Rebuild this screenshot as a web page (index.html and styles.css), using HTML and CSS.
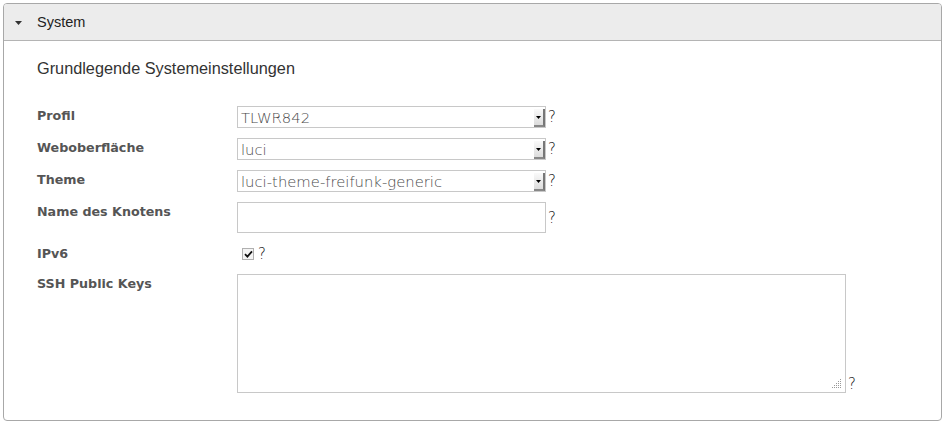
FILE: index.html
```html
<!DOCTYPE html>
<html lang="de">
<head>
<meta charset="utf-8">
<title>System</title>
<link rel="stylesheet" href="styles.css">
</head>
<body>
<div class="panel">
  <div class="panel-head">
    <svg class="caret" width="7" height="4" viewBox="0 0 7 4"><path d="M0 0h7L3.5 4z" fill="#333"/></svg>
    <span class="panel-title">System</span>
  </div>
  <div class="panel-body">
    <p class="desc">Grundlegende Systemeinstellungen</p>
    <div class="form">
      <div class="row row-select">
        <label class="lbl">Profil</label>
        <div class="field">
          <div class="select"><span class="sel-text">TLWR842</span><span class="sel-btn"><svg width="5" height="3" viewBox="0 0 5 3"><path d="M0 0h5L2.5 3z" fill="#000"/></svg></span></div>
          <span class="help">?</span>
        </div>
      </div>
      <div class="row row-select">
        <label class="lbl">Weboberfläche</label>
        <div class="field">
          <div class="select"><span class="sel-text">luci</span><span class="sel-btn"><svg width="5" height="3" viewBox="0 0 5 3"><path d="M0 0h5L2.5 3z" fill="#000"/></svg></span></div>
          <span class="help">?</span>
        </div>
      </div>
      <div class="row row-select">
        <label class="lbl">Theme</label>
        <div class="field">
          <div class="select"><span class="sel-text">luci-theme-freifunk-generic</span><span class="sel-btn"><svg width="5" height="3" viewBox="0 0 5 3"><path d="M0 0h5L2.5 3z" fill="#000"/></svg></span></div>
          <span class="help">?</span>
        </div>
      </div>
      <div class="row row-text">
        <label class="lbl">Name des Knotens</label>
        <div class="field">
          <div class="textbox"></div>
          <span class="help help-text">?</span>
        </div>
      </div>
      <div class="row row-check">
        <label class="lbl">IPv6</label>
        <div class="field">
          <span class="checkbox"><svg width="9" height="8" viewBox="0 0 9 8"><path d="M1 4.2l2.4 2.4L8 1.3" fill="none" stroke="#111" stroke-width="1.8"/></svg></span>
          <span class="help help-check">?</span>
        </div>
      </div>
      <div class="row row-area">
        <label class="lbl">SSH Public Keys</label>
        <div class="field field-area">
          <div class="textarea"><span class="grip"><svg width="9" height="9" viewBox="0 0 9 9"><g fill="#999"><rect x="8" y="0" width="1" height="1"/><rect x="6" y="2" width="1" height="1"/><rect x="8" y="2" width="1" height="1"/><rect x="4" y="4" width="1" height="1"/><rect x="6" y="4" width="1" height="1"/><rect x="8" y="4" width="1" height="1"/><rect x="2" y="6" width="1" height="1"/><rect x="4" y="6" width="1" height="1"/><rect x="6" y="6" width="1" height="1"/><rect x="8" y="6" width="1" height="1"/><rect x="0" y="8" width="1" height="1"/><rect x="2" y="8" width="1" height="1"/><rect x="4" y="8" width="1" height="1"/><rect x="6" y="8" width="1" height="1"/><rect x="8" y="8" width="1" height="1"/></g></svg></span></div>
          <span class="help help-area">?</span>
        </div>
      </div>
    </div>
  </div>
</div>
</body>
</html>
```

FILE: styles.css
```css
html, body {
  margin: 0;
  padding: 0;
  background: #fff;
}
body {
  padding: 3px 0 0 3px;
  font-family: "Liberation Sans", Arial, sans-serif;
}
.panel {
  width: 937px;
  height: 416px;
  border: 1px solid #a8a8a8;
  border-radius: 4px;
  overflow: hidden;
}
.panel-head {
  height: 36px;
  background: #ececec;
  border-bottom: 1px solid #b4b4b4;
  display: flex;
  align-items: center;
}
.caret {
  margin-left: 11px;
  margin-right: 15px;
  margin-top: 1px;
  flex: none;
}
.panel-title {
  font-size: 14.5px;
  color: #222;
}
.panel-body {
  padding: 18px 0 0 33px;
}
.desc {
  margin: 0;
  font-size: 16.3px;
  color: #333;
  line-height: 18px;
}
.form {
  margin-top: 29px;
}
.row {
  display: flex;
}
.lbl {
  width: 200px;
  flex: none;
  font-family: "DejaVu Sans", Verdana, sans-serif;
  font-weight: bold;
  font-size: 12.7px;
  color: #555;
  line-height: 16px;
  padding-top: 2px;
}
.field {
  display: flex;
  align-items: flex-start;
}
.row-select {
  height: 32px;
}
.select {
  width: 307px;
  height: 20px;
  border: 1px solid #c8c8c8;
  display: flex;
  align-items: center;
  justify-content: space-between;
  background: #fff;
}
.sel-text {
  font-family: "DejaVu Sans", sans-serif;
  font-weight: 200;
  font-size: 14.8px;
  color: #4a4a4a;
  padding-left: 3px;
  white-space: nowrap;
}
.sel-btn {
  width: 9px;
  height: 16px;
  background: linear-gradient(#fafafa, #dcdcdc);
  border-right: 2px solid #777;
  border-bottom: 2px solid #888;
  display: flex;
  align-items: center;
  justify-content: center;
  align-self: flex-end;
}
.help {
  font-family: "DejaVu Sans", sans-serif;
  font-weight: 200;
  font-size: 15px;
  color: #111;
  margin-left: 2px;
  line-height: 15px;
  margin-top: 4px;
}
.row-text {
  height: 45px;
}
.textbox {
  width: 307px;
  height: 29px;
  border: 1px solid #c8c8c8;
  background: #fff;
}
.help-text {
  margin-top: 9px;
}
.row-check {
  height: 27px;
}
.row-check .lbl {
  padding-top: 0;
  line-height: 14px;
}
.checkbox {
  width: 10px;
  height: 10px;
  border: 1px solid #b0b0b0;
  background: #f4f4f4;
  margin-left: 5px;
  margin-top: 1px;
  display: flex;
  align-items: center;
  justify-content: center;
}
.help-check {
  margin-left: 4px;
  margin-top: 0;
}
.field-area {
  align-items: flex-end;
}
.textarea {
  width: 607px;
  height: 117px;
  border: 1px solid #c8c8c8;
  background: #fff;
  position: relative;
}
.grip {
  position: absolute;
  right: 4px;
  bottom: 4px;
  line-height: 0;
}
.help-area {
  margin-bottom: 1px;
}
```
